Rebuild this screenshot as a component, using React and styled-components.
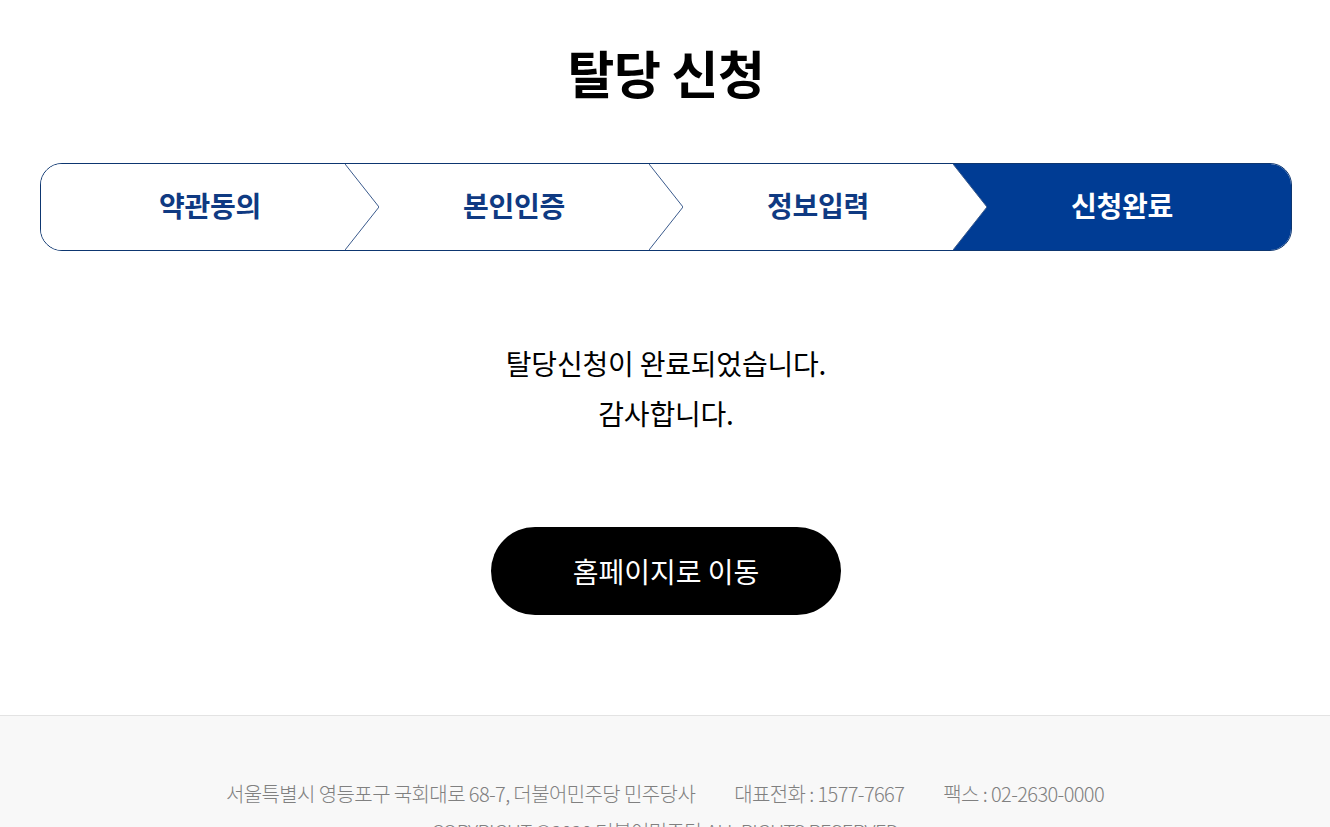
import React from "react";
import styled, { createGlobalStyle } from "styled-components";

const GlobalStyle = createGlobalStyle`
  * { box-sizing: border-box; }
  body {
    margin: 0;
    background: #fff;
    font-family: "Noto Sans CJK KR", "Noto Sans", sans-serif;
    color: #000;
  }
`;

const Page = styled.div`
  display: flex;
  flex-direction: column;
  min-height: 100vh;
`;

const Main = styled.main`
  display: flex;
  flex-direction: column;
  align-items: center;
  padding: 42px 38px 100px 40px;
`;

const Title = styled.h1`
  margin: 0;
  font-size: 51px;
  line-height: 60px;
  font-weight: 700;
  letter-spacing: -0.5px;
`;

const StepBar = styled.ol`
  list-style: none;
  margin: 61px 0 0;
  padding: 0;
  width: 100%;
  height: 88px;
  display: flex;
  border: 1px solid #0d3670;
  border-radius: 22px;
  overflow: hidden;
`;

const Step = styled.li`
  flex: 1;
  display: grid;
  margin-left: ${(p) => (p.$first ? "0" : "-34px")};
  z-index: ${(p) => p.$layer};

  & > * {
    grid-area: 1 / 1;
  }
`;

const Shape = styled.div`
  display: flex;
`;

const Fill = styled.div`
  flex: 1;
  background: ${(p) => (p.$active ? "#003c94" : "#fff")};
`;

const Chevron = styled.svg`
  width: 34px;
  height: 100%;
  display: block;
`;

const Label = styled.span`
  align-self: center;
  justify-self: center;
  margin-bottom: 4px;
  font-size: 28px;
  font-weight: 700;
  letter-spacing: -0.3px;
  color: ${(p) => (p.$active ? "#fff" : "#0f3a82")};
`;

const Message = styled.p`
  margin: 87px 0 0;
  font-size: 28px;
  line-height: 50px;
  font-weight: 400;
  text-align: center;
  letter-spacing: -0.2px;
`;

const HomeButton = styled.button`
  margin-top: 89px;
  width: 350px;
  height: 88px;
  border: none;
  border-radius: 44px;
  background: #000;
  color: #fff;
  font-family: inherit;
  font-size: 28px;
  font-weight: 400;
  cursor: pointer;
`;

const Footer = styled.footer`
  border-top: 1px solid #e3e3e3;
  background: #f8f8f8;
  padding: 67px 0 40px;
  display: flex;
  flex-direction: column;
  align-items: center;
  gap: 16px;
  color: #808080;
  font-size: 20px;
  font-weight: 300;
  letter-spacing: -0.6px;
  line-height: 22px;
`;

const InfoRow = styled.div`
  display: flex;
  gap: 39px;
`;

const steps = ["약관동의", "본인인증", "정보입력", "신청완료"];

export default function App() {
  return (
    <Page>
      <GlobalStyle />
      <Main>
        <Title>탈당 신청</Title>
        <StepBar>
          {steps.map((name, i) => {
            const active = i === steps.length - 1;
            return (
              <Step key={name} $first={i === 0} $layer={steps.length - i}>
                <Shape>
                  <Fill $active={active} />
                  {!active && (
                    <Chevron viewBox="0 0 34 86" preserveAspectRatio="none">
                      <polygon points="0,0 34,43 0,86" fill="#fff" />
                      <polyline
                        points="0,0 34,43 0,86"
                        fill="none"
                        stroke="#3a5a8c"
                        strokeWidth="1"
                      />
                    </Chevron>
                  )}
                </Shape>
                <Label $active={active}>{name}</Label>
              </Step>
            );
          })}
        </StepBar>
        <Message>
          탈당신청이 완료되었습니다.
          <br />
          감사합니다.
        </Message>
        <HomeButton>홈페이지로 이동</HomeButton>
      </Main>
      <Footer>
        <InfoRow>
          <span>서울특별시 영등포구 국회대로 68-7, 더불어민주당 민주당사</span>
          <span>대표전화 : 1577-7667</span>
          <span>팩스 : 02-2630-0000</span>
        </InfoRow>
        <div>COPYRIGHT ©2020 더불어민주당 ALL RIGHTS RESERVED</div>
      </Footer>
    </Page>
  );
}
